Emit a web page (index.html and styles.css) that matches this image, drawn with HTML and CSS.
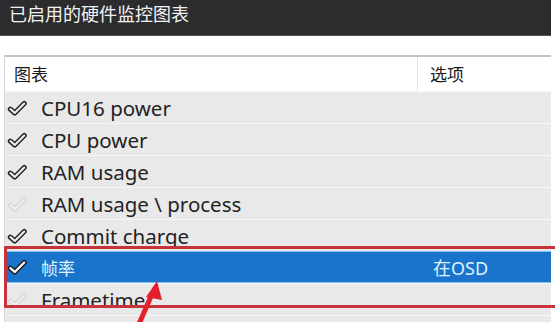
FILE: index.html
```html
<!DOCTYPE html>
<html lang="zh">
<head>
<meta charset="utf-8">
<link rel="stylesheet" href="styles.css">
</head>
<body>
<div class="page">
  <div class="titlebar">已启用的硬件监控图表</div>
  <div class="gap"></div>
  <div class="table">
    <div class="head">
      <div class="hcell c1">图表</div>
      <div class="hcell c2">选项</div>
    </div>
    <div class="row"><span class="chk on"><svg viewBox="0 0 18 14"><path class="o" d="M3 8 L7 11.5 L15.5 3"/><path class="i" d="M3 8 L7 11.5 L15.5 3"/></svg></span><span class="name">CPU16 power</span><span class="opt"></span></div>
    <div class="row"><span class="chk on"><svg viewBox="0 0 18 14"><path class="o" d="M3 8 L7 11.5 L15.5 3"/><path class="i" d="M3 8 L7 11.5 L15.5 3"/></svg></span><span class="name">CPU power</span><span class="opt"></span></div>
    <div class="row"><span class="chk on"><svg viewBox="0 0 18 14"><path class="o" d="M3 8 L7 11.5 L15.5 3"/><path class="i" d="M3 8 L7 11.5 L15.5 3"/></svg></span><span class="name">RAM usage</span><span class="opt"></span></div>
    <div class="row"><span class="chk off"><svg viewBox="0 0 18 14"><path class="o" d="M3 8 L7 11.5 L15.5 3"/><path class="i" d="M3 8 L7 11.5 L15.5 3"/></svg></span><span class="name">RAM usage \ process</span><span class="opt"></span></div>
    <div class="row"><span class="chk on"><svg viewBox="0 0 18 14"><path class="o" d="M3 8 L7 11.5 L15.5 3"/><path class="i" d="M3 8 L7 11.5 L15.5 3"/></svg></span><span class="name">Commit charge</span><span class="opt"></span></div>
    <div class="row sel"><span class="chk on"><svg viewBox="0 0 18 14"><path class="o" d="M3 8 L7 11.5 L15.5 3"/><path class="i" d="M3 8 L7 11.5 L15.5 3"/></svg></span><span class="name">帧率</span><span class="opt">在OSD</span></div>
    <div class="row"><span class="chk off"><svg viewBox="0 0 18 14"><path class="o" d="M3 8 L7 11.5 L15.5 3"/><path class="i" d="M3 8 L7 11.5 L15.5 3"/></svg></span><span class="name">Frametime</span><span class="opt"></span></div>
    <div class="row"><span class="chk off"></span><span class="name"></span><span class="opt"></span></div>
  </div>
  <div class="redbox"></div>
  <svg class="arrow" viewBox="0 0 555 322" width="555" height="322">
    <path d="M139 324 L152 294" stroke="#e3202b" stroke-width="5" fill="none"/>
    <path d="M157 281 L146 297 L162 300 Z" fill="#e3202b"/>
  </svg>
</div>
</body>
</html>
```
FILE: styles.css
```css
html, body {
  margin: 0;
  padding: 0;
  background: #ffffff;
}
.page {
  position: relative;
  width: 555px;
  height: 322px;
  overflow: hidden;
  font-family: "Noto Sans", "Noto Sans CJK SC", sans-serif;
}
.titlebar {
  width: 551px;
  height: 36px;
  background: #2c2c2f;
  border-bottom: 1px solid #555;
  box-sizing: border-box;
  color: #f2f2f2;
  font-size: 18px;
  line-height: 22px;
  padding: 2px 0 0 9px;
  font-family: "Noto Sans CJK SC", sans-serif;
}
.gap {
  height: 19px;
}
.table {
  width: 547px;
  margin-left: 4px;
  border-top: 2px solid #c4c4c4;
  border-left: 1px solid #d6d6d6;
  box-sizing: border-box;
}
.head {
  display: flex;
  height: 34px;
  background: #ffffff;
}
.hcell {
  font-family: "Noto Sans CJK SC", sans-serif;
  font-size: 17px;
  line-height: 34px;
  color: #1a1a1a;
}
.hcell.c1 {
  width: 413px;
  padding-left: 9px;
  box-sizing: border-box;
  border-right: 1px solid #e2e2e2;
}
.hcell.c2 {
  padding-left: 12px;
}
.row {
  display: flex;
  align-items: center;
  height: 32px;
  background: #e9e9e9;
  border-top: 1px solid #f6f6f6;
  box-sizing: border-box;
  color: #232323;
  font-size: 20.5px;
}
.chk {
  width: 36px;
  display: flex;
  align-items: center;
  padding-left: 2px;
  box-sizing: border-box;
}
.chk svg {
  width: 20px;
  height: 16px;
}
.chk path {
  fill: none;
  stroke-linecap: round;
  stroke-linejoin: round;
}
.chk.on .o { stroke: #262626; stroke-width: 4.6; }
.chk.on .i { stroke: #f2f2f2; stroke-width: 1.8; }
.chk.off .o { stroke: #d8d8d8; stroke-width: 4.6; }
.chk.off .i { stroke: #ededed; stroke-width: 1.8; }
.name {
  width: 392px;
  white-space: nowrap;
}
.opt {
  font-family: "Noto Sans", "Noto Sans CJK SC", sans-serif;
  font-size: 18px;
}
.row.sel {
  background: #1a74cc;
  color: #dff2ff;
  border-top: 1px solid #7cc1f0;
  border-bottom: 1px solid #7cc1f0;
}
.row.sel .name {
  font-family: "Noto Sans CJK SC", sans-serif;
  font-size: 17px;
}
.row.sel .chk.on .i { stroke: #ffffff; stroke-width: 2; }
.row.sel .chk.on .o { stroke: #202020; }
.redbox {
  position: absolute;
  left: 4px;
  top: 246px;
  width: 560px;
  height: 62px;
  border: 3px solid #c8323a;
  box-sizing: border-box;
  border-radius: 1px;
}
.arrow {
  position: absolute;
  left: 0;
  top: 0;
}
```
